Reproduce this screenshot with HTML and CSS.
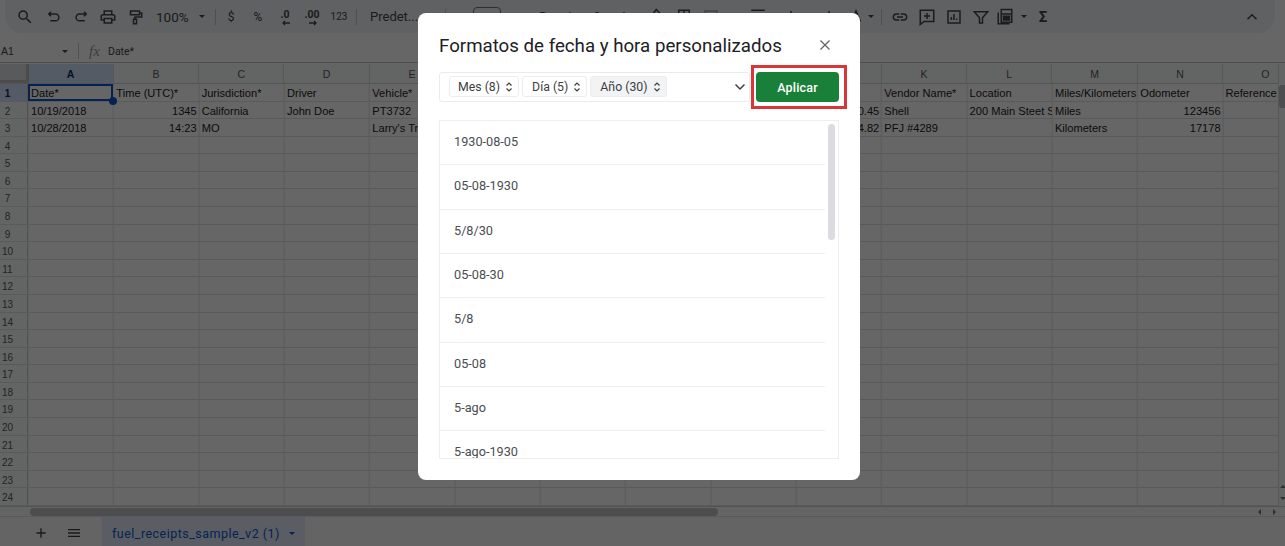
FILE: index.html
```html
<!DOCTYPE html>
<html lang="es">
<head>
  <meta charset="utf-8">
  <title>fuel_receipts_sample_v2 (1)</title>
  <link rel="stylesheet" href="styles.css">
</head>
<body>

<div class="app">
  <div class="toolbar">
    <svg class="icon search-icon" viewBox="0 0 24 24"><path class="fill" d="M15.5 14h-.79l-.28-.27A6.47 6.47 0 0 0 16 9.5 6.5 6.5 0 1 0 9.5 16c1.61 0 3.09-.59 4.23-1.57l.27.28v.79l5 4.99L20.49 19l-4.99-5zm-6 0C7.01 14 5 11.99 5 9.5S7.01 5 9.5 5 14 7.01 14 9.5 11.99 14 9.5 14z"/></svg>
    <svg class="icon" viewBox="0 0 24 24"><path class="line" d="M8 5 5 8l3 3M5 8h9a4.5 4.5 0 0 1 0 9H7"/></svg>
    <svg class="icon" viewBox="0 0 24 24"><path class="line" d="M16 5l3 3-3 3M19 8h-9a4.5 4.5 0 0 0 0 9h7"/></svg>
    <svg class="icon" viewBox="0 0 24 24"><path class="fill" d="M19 8h-1V3H6v5H5c-1.66 0-3 1.34-3 3v6h4v4h12v-4h4v-6c0-1.66-1.34-3-3-3zM8 5h8v3H8V5zm8 12v2H8v-4h8v2zm2-2v-2H6v2H4v-4c0-.55.45-1 1-1h14c.55 0 1 .45 1 1v4h-2z"/></svg>
    <svg class="icon" viewBox="0 0 24 24"><path class="line" d="M6 4h12v5H6zM18 6.500h3v5.500h-9v3M10 15h4v6h-4z"/></svg>
    <span class="zoom-text">100%</span>
    <span class="caret"></span>
    <span class="divider after-zoom"></span>
    <span class="tool-text">$</span>
    <span class="tool-text">%</span>
    <span class="tool-text dec">.0<svg viewBox="0 0 10 6"><path class="line thin" d="M9 3H2M4 1 2 3l2 2"/></svg></span>
    <span class="tool-text dec">.00<svg viewBox="0 0 10 6"><path class="line thin" d="M1 3h7M6 1l2 2-2 2"/></svg></span>
    <span class="tool-text small">123</span>
    <span class="divider after-num"></span>
    <span class="font-name">Predet...</span>
    <span class="divider after-font"></span>
    <span class="font-size">10</span>
    <span class="tool-text style-b">B</span>
    <span class="tool-text">I</span>
    <span class="tool-text">S</span>
    <span class="tool-text">A</span>
    <svg class="icon fill-color" viewBox="0 0 24 24"><path class="line" d="M11 2l8 8-7 7-7-7z"/></svg>
    <svg class="icon" viewBox="0 0 24 24"><path class="line" d="M5 3h14v18H5zM5 12h14M12 3v18"/></svg>
    <svg class="icon" viewBox="0 0 24 24"><path class="line faint" d="M4 4h16v16H4z"/></svg>
    <svg class="icon align" viewBox="0 0 24 24"><path class="line" d="M3 3h18M3 9h18M3 15h18"/></svg>
    <svg class="icon wrap" viewBox="0 0 24 24"><path class="line" d="M12 4v10"/></svg>
    <svg class="icon rotate" viewBox="0 0 24 24"><path class="line" d="M12 4v10"/></svg>
    <svg class="icon text-color" viewBox="0 0 24 24"><path class="line" d="M6 18 12 4l6 14"/></svg>
    <span class="caret tight"></span>
    <span class="divider after-color"></span>
    <svg class="icon link-icon" viewBox="0 0 24 24"><path class="fill" d="M17 7h-4v2h4c1.650 0 3 1.350 3 3s-1.350 3-3 3h-4v2h4c2.760 0 5-2.240 5-5s-2.240-5-5-5zm-6 8H7c-1.650 0-3-1.350-3-3s1.350-3 3-3h4V7H7c-2.760 0-5 2.240-5 5s2.240 5 5 5h4v-2zm-3-4h8v2H8z"/></svg>
    <svg class="icon" viewBox="0 0 24 24"><path class="line" d="M3 3h18v15H8l-5 4zM12 6.500v8M8 10.500h8"/></svg>
    <svg class="icon" viewBox="0 0 24 24"><path class="line" d="M4 4h16v16H4zM8.500 16v-4M12 16V8M15.500 16v-2"/></svg>
    <svg class="icon" viewBox="0 0 24 24"><path class="line" d="M3 5h18l-7 8v7h-4v-7z"/></svg>
    <svg class="icon calc" viewBox="0 0 24 24"><path class="line" d="M3 6v15h15M7 2h14v17H7zM7 8h14"/><path class="fill" d="M9 10h10v7H9z"/></svg>
    <span class="caret calc-caret"></span>
    <span class="tool-text sigma">Σ</span>
    <svg class="icon collapse" viewBox="0 0 24 24"><path class="line" d="M6 15l6-6 6 6"/></svg>
  </div>

  <div class="formula-bar">
    <span class="cell-ref">A1</span>
    <span class="caret"></span>
    <span class="divider"></span>
    <span class="fx">fx</span>
    <span class="formula-text">Date*</span>
  </div>

  <div class="sheet">
    <div class="col-heads">
      <div class="corner"></div>
      <div class="col-head active">A</div>
      <div class="col-head">B</div>
      <div class="col-head">C</div>
      <div class="col-head">D</div>
      <div class="col-head">E</div>
      <div class="col-head">F</div>
      <div class="col-head">G</div>
      <div class="col-head">H</div>
      <div class="col-head">I</div>
      <div class="col-head">J</div>
      <div class="col-head">K</div>
      <div class="col-head">L</div>
      <div class="col-head">M</div>
      <div class="col-head">N</div>
      <div class="col-head">O</div>
    </div>

    <div class="rows">
      <div class="row">
        <div class="row-num active">1</div>
        <div class="cell selected">Date*<span class="handle"></span></div>
        <div class="cell">Time (UTC)*</div>
        <div class="cell">Jurisdiction*</div>
        <div class="cell">Driver</div>
        <div class="cell">Vehicle*</div>
        <div class="cell"></div>
        <div class="cell"></div>
        <div class="cell"></div>
        <div class="cell"></div>
        <div class="cell"></div>
        <div class="cell">Vendor Name*</div>
        <div class="cell">Location</div>
        <div class="cell wide">Miles/Kilometers</div>
        <div class="cell">Odometer</div>
        <div class="cell">Reference</div>
      </div>
      <div class="row">
        <div class="row-num">2</div>
        <div class="cell">10/19/2018</div>
        <div class="cell num">1345</div>
        <div class="cell">California</div>
        <div class="cell">John Doe</div>
        <div class="cell">PT3732</div>
        <div class="cell"></div>
        <div class="cell"></div>
        <div class="cell"></div>
        <div class="cell"></div>
        <div class="cell num">30.45</div>
        <div class="cell">Shell</div>
        <div class="cell">200 Main Steet Suite</div>
        <div class="cell">Miles</div>
        <div class="cell num">123456</div>
        <div class="cell"></div>
      </div>
      <div class="row">
        <div class="row-num">3</div>
        <div class="cell">10/28/2018</div>
        <div class="cell num">14:23</div>
        <div class="cell">MO</div>
        <div class="cell"></div>
        <div class="cell">Larry's Truck</div>
        <div class="cell"></div>
        <div class="cell"></div>
        <div class="cell"></div>
        <div class="cell"></div>
        <div class="cell num">84.82</div>
        <div class="cell">PFJ #4289</div>
        <div class="cell"></div>
        <div class="cell">Kilometers</div>
        <div class="cell num">17178</div>
        <div class="cell"></div>
      </div>
      <div class="row"><div class="row-num">4</div></div>
      <div class="row"><div class="row-num">5</div></div>
      <div class="row"><div class="row-num">6</div></div>
      <div class="row"><div class="row-num">7</div></div>
      <div class="row"><div class="row-num">8</div></div>
      <div class="row"><div class="row-num">9</div></div>
      <div class="row"><div class="row-num">10</div></div>
      <div class="row"><div class="row-num">11</div></div>
      <div class="row"><div class="row-num">12</div></div>
      <div class="row"><div class="row-num">13</div></div>
      <div class="row"><div class="row-num">14</div></div>
      <div class="row"><div class="row-num">15</div></div>
      <div class="row"><div class="row-num">16</div></div>
      <div class="row"><div class="row-num">17</div></div>
      <div class="row"><div class="row-num">18</div></div>
      <div class="row"><div class="row-num">19</div></div>
      <div class="row"><div class="row-num">20</div></div>
      <div class="row"><div class="row-num">21</div></div>
      <div class="row"><div class="row-num">22</div></div>
      <div class="row"><div class="row-num">23</div></div>
      <div class="row"><div class="row-num">24</div></div>
    </div>

    <div class="v-scroll">
      <div class="v-thumb"></div>
      <div class="v-arrows">
        <span class="arrow-up"></span>
        <span class="arrow-down"></span>
      </div>
    </div>
  </div>

  <div class="h-scroll">
    <div class="h-thumb"></div>
    <div class="h-arrows">
      <span class="arrow-left"></span>
      <span class="arrow-right"></span>
    </div>
  </div>

  <div class="tabs">
    <svg class="tab-icon add" viewBox="0 0 24 24"><path class="fill dark" d="M19 13h-6v6h-2v-6H5v-2h6V5h2v6h6v2z"/></svg>
    <svg class="tab-icon menu" viewBox="0 0 24 24"><path class="fill dark" d="M3 6h18v2H3zM3 11h18v2H3zM3 16h18v2H3z"/></svg>
    <div class="tab">
      <span>fuel_receipts_sample_v2 (1)</span>
      <span class="caret blue"></span>
    </div>
  </div>
</div>

<div class="overlay">
  <div class="modal">
    <div class="modal-head">
      <h2>Formatos de fecha y hora personalizados</h2>
      <button class="close">
        <svg viewBox="0 0 12 12"><path d="M1.500 1.500l9 9M10.500 1.500l-9 9"/></svg>
      </button>
    </div>

    <div class="format-row">
      <div class="format-input">
        <span class="chip">Mes (8)<svg viewBox="0 0 8 12"><path d="M1.500 4.500 4 2l2.500 2.500M1.500 7.500 4 10l2.500-2.500"/></svg></span>
        <span class="chip">Día (5)<svg viewBox="0 0 8 12"><path d="M1.500 4.500 4 2l2.500 2.500M1.500 7.500 4 10l2.500-2.500"/></svg></span>
        <span class="chip current">Año (30)<svg viewBox="0 0 8 12"><path d="M1.500 4.500 4 2l2.500 2.500M1.500 7.500 4 10l2.500-2.500"/></svg></span>
        <svg class="chevron" viewBox="0 0 12 8"><path d="M1.500 1.500 6 6l4.500-4.500"/></svg>
      </div>
      <button class="apply">Aplicar</button>
      <div class="highlight"></div>
    </div>

    <div class="format-list">
      <div class="format-item">1930-08-05</div>
      <div class="format-item">05-08-1930</div>
      <div class="format-item">5/8/30</div>
      <div class="format-item">05-08-30</div>
      <div class="format-item">5/8</div>
      <div class="format-item">05-08</div>
      <div class="format-item">5-ago</div>
      <div class="format-item">5-ago-1930</div>
      <div class="list-thumb"></div>
    </div>
  </div>
</div>

</body>
</html>
```

FILE: styles.css
```css
html, body {
  margin: 0;
  padding: 0;
  height: 100%;
  overflow: hidden;
  background: #fff;
  font-family: 'Liberation Sans', Arial, sans-serif;
}
.app {
  height: 546px;
  display: flex;
  flex-direction: column;
  background: #fff;
}

/* toolbar */
.toolbar {
  height: 33px;
  margin: 0 10px 0 5px;
  padding-left: 8px;
  display: flex;
  align-items: center;
  gap: 3px;
  background: #eef2f8;
  border-radius: 0 0 17px 17px;
  font-family: Roboto, sans-serif;
  color: #444746;
}
.icon {
  flex: 0 0 24px;
  width: 24px;
  height: 18px;
}
.search-icon {
  margin-right: 2px;
}
.line {
  fill: none;
  stroke: #444746;
  stroke-width: 2;
}
.line.thin {
  stroke-width: 1.3;
}
.line.faint {
  stroke: #a8abaa;
}
.fill {
  fill: #444746;
}
.fill.dark {
  fill: #3c4043;
}
.zoom-text {
  margin-left: 6px;
  font-size: 13.5px;
  width: 40px;
}
.caret {
  display: inline-block;
  flex: none;
  width: 0;
  height: 0;
  border-left: 3.500px solid transparent;
  border-right: 3.500px solid transparent;
  border-top: 3.500px solid #444746;
}
.caret.blue {
  border-top-color: #0b57d0;
}
.caret.tight {
  margin-left: -3px;
}
.caret.calc-caret {
  margin-left: 1px;
  margin-right: 1px;
}
.divider {
  flex: none;
  width: 1px;
  height: 16px;
  background: #c7c7c7;
}
.divider.after-zoom {
  margin-left: 7px;
}
.divider.after-num {
  margin-left: 2px;
}
.divider.after-font {
  margin-left: 10px;
}
.divider.after-color {
  margin: 0 3px 0 4px;
}
.tool-text {
  flex: 0 0 24px;
  text-align: center;
  font-size: 12px;
}
.tool-text.small {
  font-size: 10px;
}
.tool-text.dec {
  position: relative;
  font-size: 10.5px;
  font-weight: 700;
  margin-top: -4px;
  line-height: 12px;
}
.dec svg {
  position: absolute;
  left: 8px;
  top: 11px;
  width: 10px;
  height: 6px;
}
.tool-text.sigma {
  font-size: 15px;
  font-weight: 700;
}
.font-name {
  flex: none;
  width: 62px;
  font-size: 13px;
  margin-left: 10px;
}
.font-size {
  flex: none;
  width: 28px;
  height: 20px;
  box-sizing: border-box;
  text-align: center;
  border: 1px solid #747775;
  border-radius: 4px;
  font-size: 12px;
  line-height: 20px;
  margin: 0 27px 0 24px;
}
.fill-color {
  margin-left: 6px;
}
.align {
  margin-left: 20px;
}
.wrap {
  margin-left: 6px;
}
.rotate {
  margin-left: 11px;
}
.calc {
  margin-left: -3px;
}
.collapse {
  margin-left: auto;
  margin-right: 11px;
}

/* formula bar */
.formula-bar {
  height: 30px;
  box-sizing: border-box;
  display: flex;
  align-items: center;
  padding: 7px 0 0 1px;
  border-bottom: 1px solid #c4c7c5;
  font-size: 10.5px;
  color: #444746;
  margin-bottom: 1px;
}
.cell-ref {
  width: 61px;
}
.formula-bar .divider {
  margin-left: 10px;
}
.fx {
  width: 31px;
  text-align: center;
  font-family: 'Liberation Serif', serif;
  font-style: italic;
  font-size: 15px;
  color: #999;
}
.formula-text {
  font-family: Roboto, sans-serif;
  margin-left: -2px;
}

/* grid */
.sheet {
  position: relative;
  flex: 0 0 442px;
  overflow: hidden;
}
.col-heads {
  display: flex;
  height: 20px;
  box-sizing: border-box;
  width: 1340px;
  border-bottom: 1px solid #d0d0d0;
  background: #f8f9fa;
}
.corner {
  flex: 0 0 28.500px;
  box-sizing: border-box;
  background: #dfe1e5;
  border-right: 3px solid #bdbdbd;
  border-bottom: 3px solid #bdbdbd;
}
.col-head {
  flex: 0 0 85.34px;
  box-sizing: border-box;
  border-right: 1px solid #dadada;
  text-align: center;
  font-size: 10.5px;
  line-height: 21px;
  color: #575a5e;
}
.col-head.active {
  background: #d3e3fd;
  color: #0b2f66;
  font-weight: 700;
}
.rows {
  width: 1340px;
  background-image: repeating-linear-gradient(to right, #e0e0e0 0, #e0e0e0 1px, transparent 1px, transparent 85.34px);
  background-position: 27.700px 0;
  background-size: 1340px 100%;
}
.row {
  display: flex;
  height: 17.58px;
  box-sizing: border-box;
  border-bottom: 1px solid #e0e0e0;
  font-size: 11.1px;
  line-height: 17px;
  color: #222;
}
.row-num {
  flex: 0 0 28px;
  box-sizing: border-box;
  padding: 1px 12px 0 0;
  text-align: center;
  background: #f8f9fa;
  border-right: 1px solid #d0d0d0;
  font-size: 10px;
  color: #575a5e;
}
.row-num.active {
  background: #d3e3fd;
  color: #0b2f66;
  font-weight: 700;
}
.cell {
  flex: 0 0 85.34px;
  box-sizing: border-box;
  padding: 1px 2px 0 3px;
  overflow: hidden;
  white-space: nowrap;
}
.cell.num {
  text-align: right;
}
.cell.wide {
  overflow: visible;
  padding-right: 0;
}
.cell.selected {
  position: relative;
  overflow: visible;
  outline: 2px solid #0b57d0;
  outline-offset: -2px;
}
.handle {
  position: absolute;
  right: -4px;
  bottom: -4px;
  width: 8px;
  height: 8px;
  border-radius: 50%;
  background: #0b57d0;
}

/* scrollbars */
.v-scroll {
  position: absolute;
  top: 0;
  right: 0;
  bottom: 0;
  width: 6px;
  background: #f8f9fa;
  border-left: 1px solid #dadada;
}
.v-thumb {
  position: absolute;
  top: 21px;
  left: 0;
  width: 6px;
  height: 23px;
  background: #bdc1c6;
  border-radius: 3px 0 0 3px;
}
.v-arrows {
  position: absolute;
  bottom: 0;
  left: 0;
  height: 25px;
  width: 6px;
}
.arrow-up, .arrow-down {
  position: absolute;
  left: 1px;
  width: 0;
  height: 0;
  border-left: 3px solid transparent;
  border-right: 3px solid transparent;
}
.arrow-up {
  top: 4px;
  border-bottom: 3px solid #777;
}
.arrow-down {
  top: 16px;
  border-top: 3px solid #777;
}
.h-scroll {
  height: 11px;
  box-sizing: border-box;
  display: flex;
  align-items: center;
  padding-left: 30px;
  border-top: 1px solid #d0d0d0;
  border-bottom: 1px solid #e0e0e0;
  background: #f8f9fa;
}
.h-thumb {
  width: 688px;
  height: 8px;
  border-radius: 4px;
  background: #bdc1c6;
}
.h-arrows {
  margin-left: auto;
  width: 18px;
  margin-right: 9px;
  display: flex;
  justify-content: space-between;
}
.arrow-left, .arrow-right {
  width: 0;
  height: 0;
  border-top: 3px solid transparent;
  border-bottom: 3px solid transparent;
}
.arrow-left {
  border-right: 3px solid #777;
}
.arrow-right {
  border-left: 3px solid #777;
}

/* sheet tabs */
.tabs {
  flex: 1;
  display: flex;
  align-items: stretch;
  background: #f9fbfd;
}
.tab-icon {
  width: 16px;
  height: 16px;
  align-self: center;
  margin: 2px 0 0 33px;
}
.tab-icon.menu {
  margin-left: 17px;
  margin-right: 20px;
}
.tab {
  display: flex;
  align-items: center;
  gap: 9px;
  width: 203px;
  box-sizing: border-box;
  padding: 3px 0 0 10px;
  background: #e1e9f7;
  font-family: Roboto, sans-serif;
  font-size: 12.5px;
  letter-spacing: 0.47px;
  color: #0b57d0;
}

/* dialog */
.overlay {
  position: fixed;
  top: 0;
  left: 0;
  z-index: 10;
  width: 100%;
  height: 100%;
  box-sizing: border-box;
  padding: 13px 0 0 418px;
  background: rgba(0, 0, 0, 0.6);
  font-family: Roboto, sans-serif;
}
.modal {
  width: 442px;
  box-sizing: border-box;
  padding: 21px;
  background: #fff;
  border-radius: 8px;
}
.modal-head {
  display: flex;
  align-items: center;
  justify-content: space-between;
  height: 24px;
  margin-bottom: 14px;
}
.modal-head h2 {
  margin: 0;
  font-size: 18.700px;
  font-weight: 400;
  color: #202124;
  white-space: nowrap;
}
.close {
  width: 28px;
  height: 24px;
  padding: 0 0 2px;
  border: none;
  background: none;
}
.close svg {
  width: 12px;
  height: 12px;
  display: block;
  margin: 0 auto;
}
.close path {
  fill: none;
  stroke: #5f6368;
  stroke-width: 1.300;
}
.format-row {
  position: relative;
  display: flex;
  gap: 6px;
  height: 30px;
  margin-bottom: 18px;
}
.format-input {
  flex: 0 0 311px;
  box-sizing: border-box;
  display: flex;
  align-items: center;
  gap: 3px;
  padding: 0 0 1px 9px;
  border: 1px solid #ebebeb;
  border-radius: 3px;
}
.chip {
  height: 21px;
  box-sizing: border-box;
  display: flex;
  align-items: center;
  gap: 5px;
  padding: 0 5px 0 8px;
  border: 1px solid #ebedef;
  border-radius: 3px;
  font-size: 12.300px;
  color: #3c4043;
}
.chip + .chip {
  padding-left: 9px;
}
.chip.current {
  background: #f1f3f4;
}
.chip svg {
  width: 8px;
  height: 12px;
}
.chip path {
  fill: none;
  stroke: #3c4043;
  stroke-width: 1.200;
}
.chevron {
  width: 12px;
  height: 8px;
  margin-left: auto;
  margin-right: 3px;
}
.chevron path {
  fill: none;
  stroke: #3c4043;
  stroke-width: 1.500;
}
.apply {
  flex: 0 0 83px;
  border: none;
  border-radius: 4px;
  background: #188038;
  color: #fff;
  font-family: Roboto, sans-serif;
  font-size: 12.500px;
  font-weight: 500;
  letter-spacing: 0.2px;
}
.highlight {
  position: absolute;
  top: -7px;
  right: -8px;
  width: 96px;
  height: 44px;
  box-sizing: border-box;
  border: 3px solid #d9363a;
}
.format-list {
  position: relative;
  height: 339px;
  box-sizing: border-box;
  overflow: hidden;
  border: 1px solid #eeeeee;
}
.format-item {
  height: 44.350px;
  box-sizing: border-box;
  margin-right: 13px;
  padding: 13px 0 0 14px;
  border-bottom: 1px solid #eeeeee;
  font-size: 12.700px;
  line-height: 16px;
  color: #4a4d51;
}
.list-thumb {
  position: absolute;
  top: 3px;
  right: 3px;
  width: 7px;
  height: 116px;
  border-radius: 4px;
  background: #dadce0;
}
```
